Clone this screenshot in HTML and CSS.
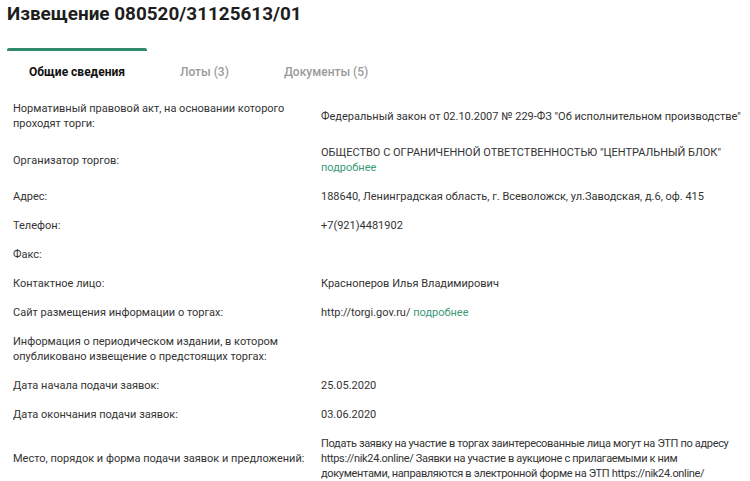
FILE: index.html
```html
<!DOCTYPE html>
<html lang="ru">
<head>
<meta charset="utf-8">
<link rel="stylesheet" href="styles.css">
</head>
<body>
<div class="page">
  <h1 class="title">Извещение 080520/31125613/01</h1>
  <nav class="tabs">
    <div class="tab active">Общие сведения</div>
    <div class="tab">Лоты (3)</div>
    <div class="tab">Документы (5)</div>
  </nav>
  <div class="rows">
    <div class="row"><div class="label">Нормативный правовой акт, на основании которого проходят торги:</div><div class="value">Федеральный закон от 02.10.2007 № 229-ФЗ "Об исполнительном производстве"</div></div>
    <div class="row"><div class="label">Организатор торгов:</div><div class="value">ОБЩЕСТВО С ОГРАНИЧЕННОЙ ОТВЕТСТВЕННОСТЬЮ "ЦЕНТРАЛЬНЫЙ БЛОК"<br><span class="link">подробнее</span></div></div>
    <div class="row"><div class="label">Адрес:</div><div class="value">188640, Ленинградская область, г. Всеволожск, ул.Заводская, д.6, оф. 415</div></div>
    <div class="row"><div class="label">Телефон:</div><div class="value">+7(921)4481902</div></div>
    <div class="row"><div class="label">Факс:</div><div class="value"></div></div>
    <div class="row"><div class="label">Контактное лицо:</div><div class="value">Красноперов Илья Владимирович</div></div>
    <div class="row"><div class="label">Сайт размещения информации о торгах:</div><div class="value">http://torgi.gov.ru/ <span class="link">подробнее</span></div></div>
    <div class="row"><div class="label">Информация о периодическом издании, в котором опубликовано извещение о предстоящих торгах:</div><div class="value"></div></div>
    <div class="row"><div class="label">Дата начала подачи заявок:</div><div class="value">25.05.2020</div></div>
    <div class="row"><div class="label">Дата окончания подачи заявок:</div><div class="value">03.06.2020</div></div>
    <div class="row"><div class="label">Место, порядок и форма подачи заявок и предложений:</div><div class="value dense">Подать заявку на участие в торгах заинтересованные лица могут на ЭТП по адресу https://nik24.online/ Заявки на участие в аукционе с прилагаемыми к ним документами, направляются в электронной форме на ЭТП https://nik24.online/</div></div>
  </div>
</div>
</body>
</html>
```

FILE: styles.css
```css
html, body {
  margin: 0;
  padding: 0;
  background: #fff;
}
.page {
  font-family: Roboto, "Noto Sans", sans-serif;
  color: #333;
  padding: 0 0 0 7px;
}
.title {
  margin: 0;
  padding-top: 1px;
  font-size: 18.9px;
  line-height: 26px;
  font-weight: 700;
  color: #1e1e1e;
}
.tabs {
  display: flex;
  gap: 11px;
  margin-top: 21px;
}
.tab {
  padding: 14px 22px 10px;
  font-size: 12px;
  line-height: 15px;
  font-weight: 500;
  color: #9a9a9a;
  border-top: 3px solid transparent;
}
.tab.active {
  color: #111;
  font-weight: 700;
  border-top-color: #2f8a6e;
  border-radius: 2px;
}
.rows {
  padding-top: 4px;
}
.row {
  display: flex;
  align-items: center;
  padding: 7px 0;
  font-size: 11px;
  line-height: 15px;
}
.label {
  width: 300px;
  flex: none;
  padding-left: 6px;
}
.value {
  flex: 1;
  padding-left: 8px;
  padding-right: 0;
}
.value.dense {
  letter-spacing: -0.33px;
  flex: none;
  max-width: 415px;
}
.link {
  color: #3d9a78;
}
```
